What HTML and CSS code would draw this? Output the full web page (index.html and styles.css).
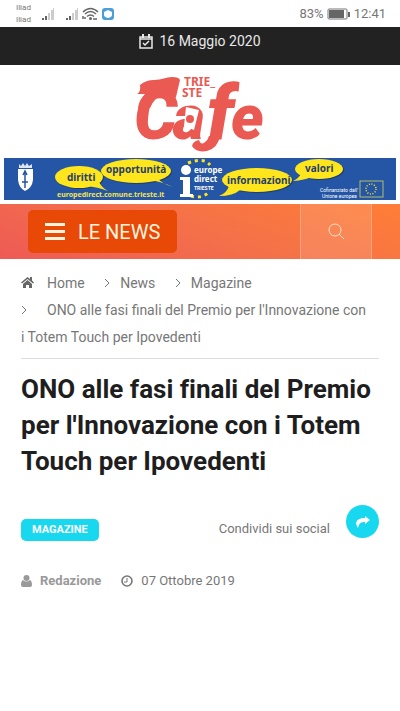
FILE: index.html
```html
<!DOCTYPE html>
<html lang="it">
    <head>
        <meta charset="utf-8">
        <meta name="viewport" content="width=device-width, initial-scale=1.0">
        <title>ONO alle fasi finali del Premio per l'Innovazione - Trieste Cafe</title>
        <link rel="stylesheet" href="styles.css">
    </head>
    <body>
        <div class="status">
            <div class="carriers"><span>Iliad</span><span>Iliad</span></div>
            <svg class="signals" width="76" height="16" viewBox="0 0 76 16" aria-hidden="true">
                <path d="M1 12h2v2H1zM4 10h2v4H4z" fill="#666"/>
                <path d="M7 7h2v7H7zM10 4h2v10h-2zM12 2h1v12h-1z" fill="#ccc"/>
                <path d="M25 12h2v2h-2zM28 10h2v4h-2z" fill="#666"/>
                <path d="M31 7h2v7h-2zM34 4h2v10h-2zM36 2h1v12h-1z" fill="#ccc"/>
                <g fill="none" stroke="#666" stroke-width="1.5">
                    <path d="M42 6q7.500-7 15 0M44 8q5.500-5 11 0M46 10.500q3.500-3 7 0"/>
                    <path d="M42 13v-3M44 13v-2M55 12v2M52 13h2"/>
                </g>
                <circle cx="49.500" cy="12.500" r="1.500" fill="#666"/>
                <rect x="61" y="2" width="12" height="12" rx="3" fill="#4b9fd8"/>
                <path d="M67 4l4 2v3q0 2-4 3q-4-1-4-3V6z" fill="#fff"/>
            </svg>
            <span class="battery">83%</span>
            <svg width="24" height="12" viewBox="0 0 24 12" aria-hidden="true">
                <rect x="1" y="1" width="19" height="10" rx="1" fill="none" stroke="#777"/>
                <path d="M2 2h15v8H2zM21 4h2v5h-2z" fill="#666"/>
            </svg>
            <span class="time">12:41</span>
        </div>
        <div class="topbar">
            <svg width="14" height="15" viewBox="0 0 14 15" fill="none" stroke="#e8e8e8" aria-hidden="true">
                <path d="M1 3h12v11H1zM1 5h12" stroke-width="1.500"/>
                <path d="M4 0v4M10 0v4" stroke-width="2"/>
                <path d="M4 9l2 2 4-4" stroke-width="1.500"/>
            </svg>
            <time datetime="2020-05-16">16 Maggio 2020</time>
        </div>
        <header>
            <a class="logo" href="#">
                <svg width="136" height="84" viewBox="0 0 136 84" role="img" aria-label="Trieste Cafe">
                    <text class="cafe" y="69"><tspan class="cafe-c" x="2">C</tspan><tspan x="41">a</tspan><tspan class="cafe-f" x="75">f</tspan><tspan x="99">e</tspan></text>
                    <path d="M8 15Q14 10 22 10C30 10 34 7 40 7Q47 7 48 10L44 27Q36 31 32 27Q24 24 18 38L6 38Q7 30 13 24L5 24Q9 22 8 15z" fill="#ea5952"/>
                    <path d="M88 66q-2 12-13 15-11 2-15-5 1-5 7-6 2 6 6 2 3-2 4-6z" fill="#ea5952"/>
                    <path d="M54 37l13 3-5 20-10-4z" fill="#fff"/>
                    <circle cx="58" cy="49" r="4" fill="#ea5952"/>
                    <text class="trieste" x="52" y="16">TRIE_</text>
                    <text class="trieste" x="50" y="27">STE</text>
                </svg>
            </a>
            <a class="banner" href="#">
                <svg viewBox="0 0 392 42" role="img" aria-label="Europe Direct Trieste">
                    <path d="M0 0h392v42H0z" fill="#2456a5"/>
                    <path d="M14 11h15v11q-1 8-8 11-6-3-7-11z" fill="#fff"/>
                    <path d="M15 10V6l2 2 2-3 2 3 2-3 2 3 3-2v4z" fill="#dce5f0"/>
                    <path d="M21 13v17M18 24h6M19 17l2-4 2 4" fill="none" stroke="#2456a5" stroke-width="1.500"/>
                    <g fill="#1c3f70" transform="translate(1 1)">
                        <ellipse cx="75" cy="19" rx="24" ry="11"/>
                        <ellipse cx="132" cy="13" rx="35" ry="12"/>
                        <ellipse cx="253" cy="22" rx="35" ry="12"/>
                        <ellipse cx="315" cy="11" rx="24" ry="10"/>
                    </g>
                    <g fill="#ffe51b">
                        <ellipse cx="75" cy="19" rx="24" ry="11"/>
                        <path d="M82 28q12 1 22 5-6-3-9-9z"/>
                        <ellipse cx="132" cy="13" rx="35" ry="12"/>
                        <path d="M143 22q14 1 26 7-11-3-17-10z"/>
                        <ellipse cx="253" cy="22" rx="35" ry="12"/>
                        <path d="M225 28q-2 7-10 10 14 0 21-6z"/>
                        <ellipse cx="315" cy="11" rx="24" ry="10"/>
                        <path d="M297 16q-3 5-8 7 12-1 18-4z"/>
                    </g>
                    <g fill="none" stroke="#ffe51b" stroke-width="3" stroke-dasharray="3 4">
                        <path d="M184 5q16-6 22 2M187 38q10 3 17-3"/>
                    </g>
                    <circle cx="182" cy="12" r="5" fill="#fff"/>
                    <path d="M176 19h10v17h3v3h-13v-3h3V22h-3z" fill="#fff"/>
                    <g class="bubble">
                        <text x="63" y="23">diritti</text>
                        <text x="102" y="15">opportunità</text>
                        <text x="223" y="26">informazioni</text>
                        <text x="301" y="14">valori</text>
                    </g>
                    <text class="site" x="53" y="39">europedirect.comune.trieste.it</text>
                    <text class="direct" x="190" y="15">europe</text>
                    <text class="direct" x="190" y="24">direct</text>
                    <text class="small" x="190" y="32">TRIESTE</text>
                    <text class="small thin" x="316" y="34">Cofinanziato dall'</text>
                    <text class="small thin" x="318" y="40">Unione europea</text>
                    <rect x="356" y="23" width="23" height="16" fill="none" stroke="#b4bd65"/>
                    <circle cx="367" cy="31" r="5" fill="none" stroke="#ffe51b" stroke-width="1.500" stroke-dasharray="1 1.600"/>
                </svg>
            </a>
            <nav class="nav">
                <button class="menu" type="button">
                    <svg width="20" height="17" viewBox="0 0 20 17" fill="#fff4df" aria-hidden="true">
                        <path d="M0 0h20v3H0zM0 7h20v3H0zM0 14h20v3H0z"/>
                    </svg>
                    LE NEWS
                </button>
                <button class="search" type="button" aria-label="Cerca">
                    <svg width="17" height="17" viewBox="0 0 17 17" fill="none" stroke="#ffe3c4" aria-hidden="true">
                        <circle cx="7" cy="7" r="6"/>
                        <path d="M11 11l5 5"/>
                    </svg>
                </button>
            </nav>
        </header>
        <main>
            <ol class="breadcrumb">
                <li>
                    <svg class="home" width="13" height="11" viewBox="0 0 13 11" fill="#666" aria-hidden="true">
                        <path d="M6.500 0L0 5.500l1 1L6.500 2 12 6.500l1-1-2-2V0H9v2z"/>
                        <path d="M2 7l4.500-4L11 7v4H8V8H5v3H2z"/>
                    </svg><a href="#">Home</a>
                </li>
                <li>
                    <svg class="arrow" width="6" height="10" viewBox="0 0 6 10" aria-hidden="true"><path d="M1 1l4 4-4 4"/></svg><a href="#">News</a>
                </li>
                <li>
                    <svg class="arrow" width="6" height="10" viewBox="0 0 6 10" aria-hidden="true"><path d="M1 1l4 4-4 4"/></svg><a href="#">Magazine</a>
                </li>
                <li class="current">
                    <svg class="arrow" width="6" height="10" viewBox="0 0 6 10" aria-hidden="true"><path d="M1 1l4 4-4 4"/></svg>ONO alle fasi finali del Premio per l'Innovazione con i Totem Touch per Ipovedenti
                </li>
            </ol>
            <h1>ONO alle fasi finali del Premio per l'Innovazione con i Totem Touch per Ipovedenti</h1>
            <div class="tools">
                <a class="category" href="#">MAGAZINE</a>
                <span class="share-label" id="share-label">Condividi sui social</span>
                <button class="share" type="button" aria-labelledby="share-label">
                    <svg width="14" height="12" viewBox="0 0 14 12" fill="#fff" aria-hidden="true">
                        <path d="M9 0l5 4-5 4V6Q3 5 2 12 0 9 0 7 1 2 9 2z"/>
                    </svg>
                </button>
            </div>
            <div class="meta">
                <svg width="11" height="12" viewBox="0 0 11 12" fill="#999" aria-hidden="true">
                    <circle cx="5.500" cy="3" r="3"/>
                    <path d="M2 5q3.500 3 7 0 2 1 2 5 0 2-2 2H2q-2 0-2-2 0-4 2-5z"/>
                </svg>
                <a class="author" href="#">Redazione</a>
                <svg width="12" height="12" viewBox="0 0 12 12" fill="none" stroke="#777" aria-hidden="true">
                    <circle cx="6" cy="6" r="5" stroke-width="1.600"/>
                    <path d="M6 3v4H3"/>
                </svg>
                <time datetime="2019-10-07">07 Ottobre 2019</time>
            </div>
        </main>
    </body>
</html>
```

FILE: styles.css
```css
* {
    box-sizing: border-box;
}
body {
    margin: 0;
    background: #fff;
    color: #777;
    font-family: Roboto, "Liberation Sans", sans-serif;
    font-size: 14px;
}
a {
    color: inherit;
    text-decoration: none;
}
button {
    border: 0;
    padding: 0;
    font-family: inherit;
    cursor: pointer;
}
svg {
    flex: none;
}
.status {
    display: flex;
    align-items: center;
    height: 27px;
    padding: 0 14px 0 16px;
    font-size: 13px;
}
.carriers {
    display: flex;
    flex-direction: column;
    width: 25px;
    font-size: 8px;
    line-height: 12px;
}
.battery {
    margin: 0 3px 0 auto;
}
.time {
    margin-left: 3px;
}
.topbar {
    display: flex;
    justify-content: center;
    align-items: center;
    gap: 6px;
    height: 38px;
    padding-bottom: 10px;
    background: #222;
    color: #e8e8e8;
}
.logo {
    display: flex;
    justify-content: center;
    padding: 5px 0 4px;
}
.cafe {
    font-family: Roboto, sans-serif;
    font-size: 62px;
    font-weight: 900;
    font-style: italic;
    fill: #ea5952;
}
.cafe-c {
    font-size: 68px;
}
.cafe-f {
    font-size: 76px;
}
.trieste {
    font-family: "Noto Sans", sans-serif;
    font-size: 12px;
    font-weight: 700;
    fill: #ea5952;
}
.banner svg {
    display: block;
    width: 100%;
}
.banner {
    display: block;
    padding: 0 4px 4px;
}
.bubble {
    font-family: "Noto Sans", sans-serif;
    font-size: 10px;
    font-weight: 700;
    fill: #25406b;
}
.site {
    font-family: "Noto Sans", sans-serif;
    font-size: 7px;
    font-weight: 700;
    fill: #f4e34d;
}
.direct {
    font-family: "Noto Sans", sans-serif;
    font-size: 8px;
    font-weight: 700;
    fill: #fff;
}
.small {
    font-size: 5px;
    font-weight: 700;
    fill: #fff;
}
.thin {
    font-weight: 400;
}
.nav {
    display: flex;
    justify-content: space-between;
    align-items: center;
    height: 55px;
    padding: 0 28px;
    background: linear-gradient(20deg, #ee5a55, #f4704a 50%, #ff7e36);
}
.menu {
    display: flex;
    align-items: center;
    gap: 13px;
    height: 43px;
    padding: 0 17px;
    border-radius: 5px;
    background: #e84907;
    color: #fff4df;
    font-size: 20px;
}
.search {
    display: flex;
    justify-content: center;
    align-items: center;
    width: 72px;
    height: 55px;
    border: solid #fba27b;
    border-width: 0 1px;
    background: rgba(255, 255, 255, 0.12);
}
main {
    padding: 11px 16px 11px 21px;
}
.breadcrumb {
    margin: 0 5px 0 0;
    padding: 0 0 7px;
    border-bottom: 1px solid #ddd;
    list-style: none;
    line-height: 27px;
}
.breadcrumb li {
    display: inline-block;
    margin-right: 16px;
}
.breadcrumb .current {
    display: block;
    margin-right: 12px;
}
.home {
    margin-right: 13px;
}
.arrow {
    margin-right: 10px;
    fill: none;
    stroke: #777;
}
.current .arrow {
    margin-right: 20px;
}
h1 {
    margin: 12px 0 26px;
    color: #1e1e1e;
    font-size: 26px;
    font-weight: 700;
    font-variant-ligatures: none;
    line-height: 36px;
}
.tools {
    display: flex;
    align-items: flex-start;
    margin-right: 5px;
}
.category {
    margin-top: 14px;
    padding: 0 11px;
    border-radius: 5px;
    background: #17d8ef;
    color: #fff;
    font-size: 11px;
    font-weight: 700;
    line-height: 22px;
}
.share-label {
    margin: 16px 16px 0 auto;
    font-size: 13px;
}
.share {
    display: flex;
    justify-content: center;
    align-items: center;
    width: 33px;
    height: 33px;
    border-radius: 50%;
    background: #17d8ef;
}
.meta {
    display: flex;
    align-items: center;
    gap: 8px;
    margin-top: 32px;
    font-size: 13px;
}
.author {
    margin-right: 12px;
    color: #999;
    font-weight: 700;
}
```
